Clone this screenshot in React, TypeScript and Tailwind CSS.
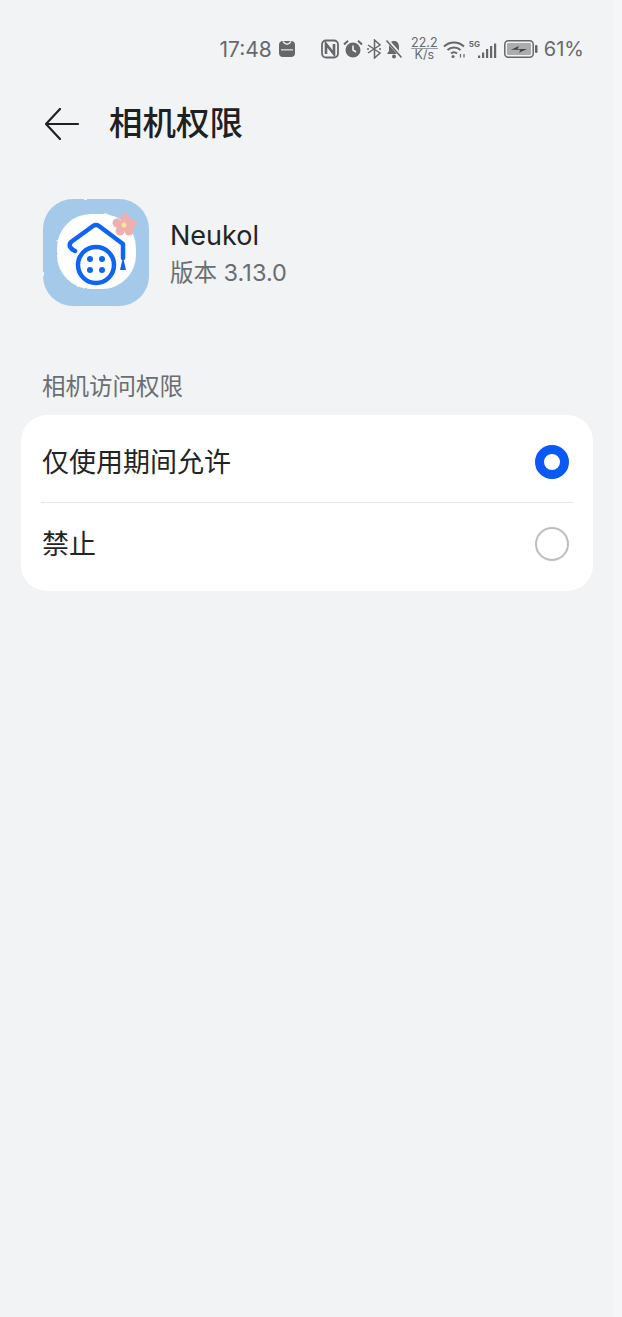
const cjk = "font-['Inter','Noto_Sans_CJK_SC',sans-serif]";

const StatusBar = () => (
  <div className="h-[46px] mt-[26px] pr-[29px] flex justify-end items-center text-[#666a6d]">
    <span className="text-[21px] leading-none mr-[6px]">17:48</span>
    {/* store badge */}
    <svg width="18" height="18" viewBox="0 0 18 18" className="mr-[25px]">
      <rect x="1" y="1" width="16" height="16" rx="4" fill="#65686b" />
      <path d="M5 1.500 Q9 7 13 1.500" fill="none" stroke="#e8e9ea" strokeWidth="1.300" />
      <rect x="3" y="9" width="12" height="1.600" fill="#c4c6c8" />
    </svg>
    {/* nfc */}
    <svg width="18" height="20" viewBox="0 0 18 20" className="mr-[4px]" fill="none" stroke="#65686b">
      <rect x="1" y="1.500" width="16" height="17" rx="4" strokeWidth="1.800" />
      <path d="M5 15V5l8 10V5" strokeWidth="2.600" />
    </svg>
    {/* alarm */}
    <svg width="20" height="20" viewBox="0 0 20 20" className="mr-[3px]">
      <circle cx="10" cy="11" r="7.500" fill="#65686b" />
      <path d="M10 6.500V11l3 2" fill="none" stroke="#f1f3f5" strokeWidth="1.600" />
      <path d="M1 5.500 5 1.800M19 5.500 15 1.800" stroke="#65686b" strokeWidth="2" />
    </svg>
    {/* bluetooth */}
    <svg width="17" height="20" viewBox="0 0 17 20" className="mr-[1px]" fill="none" stroke="#65686b" strokeWidth="1.500">
      <path d="M2 6l12 8-5.500 5V1L14 6 2 14" />
      <path d="M1 10h2M13 10h2" />
    </svg>
    {/* muted bell */}
    <svg width="20" height="20" viewBox="0 0 20 20" className="mr-[8px]">
      <path d="M10 2c3.500 0 5 2.700 5 6v4l2 3H3l2-3V8c0-3.300 1.500-6 5-6z" fill="#65686b" />
      <circle cx="10" cy="17.500" r="2" fill="#65686b" />
      <path d="M3 1l15 17" stroke="#f1f3f5" strokeWidth="3.500" />
      <path d="M2.500 1.500l15 17" stroke="#65686b" strokeWidth="1.600" />
    </svg>
    <div className="flex flex-col items-center text-[12.500px] mr-[6px] w-[25px]">
      <span className="border-b border-[#9a9c9f] leading-[11px]">22.2</span>
      <span className="leading-[12px]">K/s</span>
    </div>
    {/* wifi */}
    <svg width="24" height="20" viewBox="0 0 24 20" className="mr-[2px]" fill="none" stroke="#65686b" strokeWidth="2">
      <path d="M1 7.500c5.500-5.500 14.500-5.500 20 0" />
      <path d="M4.500 11c3.500-3.300 9.500-3.300 13 0" />
      <path d="M8 14.500c1.800-1.500 4.200-1.500 6 0" />
      <circle cx="10" cy="17.500" r="1.500" fill="#65686b" stroke="none" />
      <path d="M17.500 15v3.500M21 15v3.500" strokeWidth="1.200" />
    </svg>
    {/* 5G + signal */}
    <div className="relative w-[28px] h-[20px] mr-[7px]">
      <span className="absolute left-0 top-0 text-[8px] leading-[10px] font-bold">5G</span>
      <svg width="19" height="16" viewBox="0 0 19 16" className="absolute right-0 bottom-0" fill="#65686b">
        <rect x="0" y="12.500" width="2.200" height="2.500" />
        <rect x="4" y="9.500" width="2.200" height="5.500" />
        <rect x="8" y="6" width="2.200" height="9" />
        <rect x="12" y="3" width="2.200" height="12" />
        <rect x="16" y="0.500" width="2.200" height="14.500" />
      </svg>
    </div>
    {/* battery */}
    <svg width="34" height="18" viewBox="0 0 34 18" className="mr-[6px]">
      <rect x="0.800" y="0.800" width="28.400" height="16.400" rx="3.500" fill="none" stroke="#65686b" strokeWidth="1.500" />
      <rect x="3" y="3" width="24" height="12" rx="1" fill="#aaacae" />
      <path d="M7 9.800l8-3.800-1.500 3H23l-8 3.800 1.500-3z" fill="#3f4245" />
      <rect x="31" y="5" width="2.500" height="8" rx="1" fill="#65686b" />
    </svg>
    <span className="text-[20px] leading-none">61%</span>
  </div>
);

const AppIcon = () => (
  <svg width="108" height="110" viewBox="0 0 108 110">
    <defs>
      <filter id="rough" x="-5%" y="-5%" width="110%" height="110%">
        <feTurbulence type="fractalNoise" baseFrequency="0.15" numOctaves="2" seed="4" />
        <feDisplacementMap in="SourceGraphic" scale="2" />
      </filter>
    </defs>
    <g filter="url(#rough)">
      <rect x="1" y="1" width="106" height="107" rx="30" fill="#a5c9e9" />
      <rect x="15" y="16" width="79" height="75" rx="34" fill="#ffffff" />
    </g>
    <g fill="none" stroke="#0d65f2" strokeLinecap="round" strokeLinejoin="round">
      <path d="M33 53 Q25 49 29 44 L51 28 Q54 26 57 28 L81 46 V60" strokeWidth="4.500" />
      <circle cx="54" cy="67" r="18" strokeWidth="4.500" />
    </g>
    <g fill="#0d65f2">
      <circle cx="48" cy="61" r="3" />
      <circle cx="60" cy="61" r="3" />
      <circle cx="48" cy="72" r="3" />
      <circle cx="60" cy="72" r="3" />
      <path d="M81 59l3 13h-6z" />
    </g>
    <g fill="#eeb0ae">
      <circle cx="83" cy="20" r="4.500" />
      <circle cx="90" cy="25" r="4.500" />
      <circle cx="87" cy="33" r="4.500" />
      <circle cx="78" cy="33" r="4.500" />
      <circle cx="75" cy="25" r="4.500" />
      <circle cx="82" cy="27" r="6" />
    </g>
    <circle cx="82" cy="27" r="2.500" fill="#f4e79c" />
  </svg>
);

const Radio = ({ checked }: { checked: boolean }) => (
  <span
    className={
      checked
        ? 'size-[34px] rounded-full border-[9px] border-[#0a59f7] bg-white'
        : 'size-[34px] rounded-full border-2 border-[#bdbebf] bg-white'
    }
  />
);

export default function App() {
  return (
    <div className={`${cjk} w-[622px] h-[1317px] bg-[#f5f6f8] overflow-hidden`}>
      <div className="w-[613px] h-[1317px] bg-[#f1f3f5] flow-root">
        <StatusBar />

        {/* Header */}
        <div className="mt-[30px] pl-[44px] flex items-center h-[44px]">
          <svg width="36" height="34" viewBox="0 0 36 34" fill="none" stroke="#1f2123" strokeWidth="2.200" strokeLinecap="round" strokeLinejoin="round">
            <path d="M34 17H2M16 2 2 17l14 15" />
          </svg>
          <h1 className="ml-[29px] text-[33.500px] leading-none font-medium text-[#1e2022]">相机权限</h1>
        </div>

        {/* App info */}
        <div className="mt-[52px] pl-[42px] flex items-center">
          <AppIcon />
          <div className="ml-[20px] mt-[3px]">
            <div className="text-[27px] leading-[36px] text-[#222426]">Neukol</div>
            <div className="text-[23.500px] leading-[37px] text-[#6b6e70]">版本 3.13.0</div>
          </div>
        </div>

        <div className="mt-[64px] pl-[42px] text-[23.500px] leading-[30px] text-[#6b6e70]">相机访问权限</div>

        {/* Options */}
        <div className="mt-[13px] ml-[21px] w-[572px] h-[176px] rounded-[26px] bg-white px-[20px]">
          <div className="h-[88px] pt-[7px] flex justify-between items-center pr-[4px] border-b border-[#e5e5e5]">
            <span className="pl-[1px] pt-[2px] text-[27px] text-[#222426]">仅使用期间允许</span>
            <Radio checked />
          </div>
          <div className="h-[82px] flex justify-between items-center pr-[4px]">
            <span className="pl-[1px] pt-[2px] text-[27px] text-[#222426]">禁止</span>
            <Radio checked={false} />
          </div>
        </div>
      </div>
    </div>
  );
}
